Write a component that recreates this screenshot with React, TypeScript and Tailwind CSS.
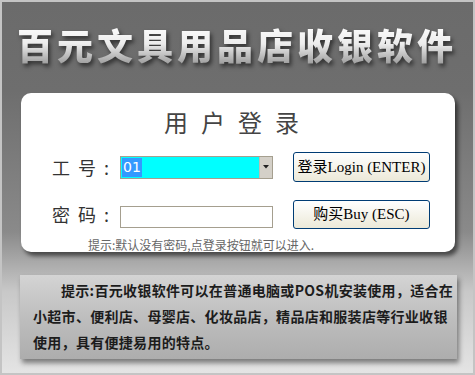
import React from 'react';

const cjk = { fontFamily: '"Noto Sans CJK SC", "Noto Sans", sans-serif' };
const btnFont = { fontFamily: '"Liberation Serif", "Noto Sans CJK SC", serif' };

export default function App() {
  return (
    <div
      className="w-[475px] h-[375px] border-2 border-[#c4c4c4] flex flex-col overflow-hidden bg-[linear-gradient(180deg,#6b6b6b_0%,#6e6e6e_24%,#8a8a8a_62%,#c8c8c8_78%,#e4e4e4_100%)]"
      style={cjk}
    >
      {/* Title */}
      <h1 className="mt-[21px] h-[42px] leading-[42px] pl-[15px] text-[36px] font-black tracking-[4px] whitespace-nowrap bg-linear-to-b from-white via-[#ececec] to-[#9a9a9a] bg-clip-text text-transparent drop-shadow-[2px_3px_2px_rgba(0,0,0,0.55)]">
        百元文具用品店收银软件
      </h1>

      {/* Login card */}
      <div className="mt-[28px] ml-[19px] w-[434px] h-[159px] bg-white rounded-[10px] shadow-[3px_4px_4px_rgba(0,0,0,0.55)] flex flex-col overflow-hidden">
        <div className="pt-[14px] h-[44px] leading-[30px] text-center text-[24px] text-[#444] tracking-[13px]">
          用户登录
        </div>

        <div className="mt-[15px] h-[30px] pl-[31px] flex items-center">
          <span className="w-[68px] text-[18px] text-[#333] tracking-[8px] whitespace-nowrap">工号:</span>
          <div className="w-[153px] h-[23px] border border-[#a59f8f] bg-[#00ffff] flex items-stretch">
            <div className="flex-1 flex items-center pl-[1px]">
              <span className="bg-[#3399ff] text-white text-[14px] leading-[19px] px-[1px]" style={{ fontFamily: '"DejaVu Sans", sans-serif' }}>
                01
              </span>
            </div>
            <div className="w-[13px] bg-[#d4d0c8] border-l border-[#c0bcb0] flex items-center justify-center">
              <svg width="6" height="4" viewBox="0 0 6 4">
                <path d="M0 0 H6 L3 3.5 Z" fill="#222" />
              </svg>
            </div>
          </div>
          <button
            className="ml-[20px] w-[137px] h-[30px] border border-[#003c74] rounded-[3px] bg-linear-to-b from-white to-[#ece9d8] text-[15px] text-black whitespace-nowrap flex items-center justify-center"
            style={btnFont}
          >
            登录Login (ENTER)
          </button>
        </div>

        <div className="mt-[18px] h-[29px] pl-[31px] flex items-center">
          <span className="w-[68px] text-[18px] text-[#333] tracking-[8px] whitespace-nowrap">密码:</span>
          <div className="mt-[4px] w-[153px] h-[22px] border border-[#a59f8f] bg-white" />
          <button
            className="ml-[20px] w-[137px] h-[29px] border border-[#003c74] rounded-[3px] bg-linear-to-b from-white to-[#ece9d8] text-[15px] text-black whitespace-nowrap flex items-center justify-center"
            style={btnFont}
          >
            购买Buy (ESC)
          </button>
        </div>

        <div className="mt-[9px] pl-[67px] text-[12px] leading-[14px] text-[#666] whitespace-nowrap">
          提示:默认没有密码,点登录按钮就可以进入.
        </div>
      </div>

      {/* Info box */}
      <div className="mt-[23px] ml-[18px] w-[437px] h-[84px] bg-[linear-gradient(180deg,#d4d4d4_0%,#c0c0c0_45%,#adadad_100%)] shadow-[2px_4px_5px_rgba(0,0,0,0.45)] pl-[13px] pt-[2px]">
        <p className="text-[14px] leading-[26px] font-semibold text-[#1c1c1c] tracking-[0.3px] whitespace-nowrap">
          <span className="pl-[28px]">提示:百元收银软件可以在普通电脑或POS机安装使用，适合在</span>
          <br />
          小超市、便利店、母婴店、化妆品店，精品店和服装店等行业收银
          <br />
          使用，具有便捷易用的特点。
        </p>
      </div>
    </div>
  );
}
